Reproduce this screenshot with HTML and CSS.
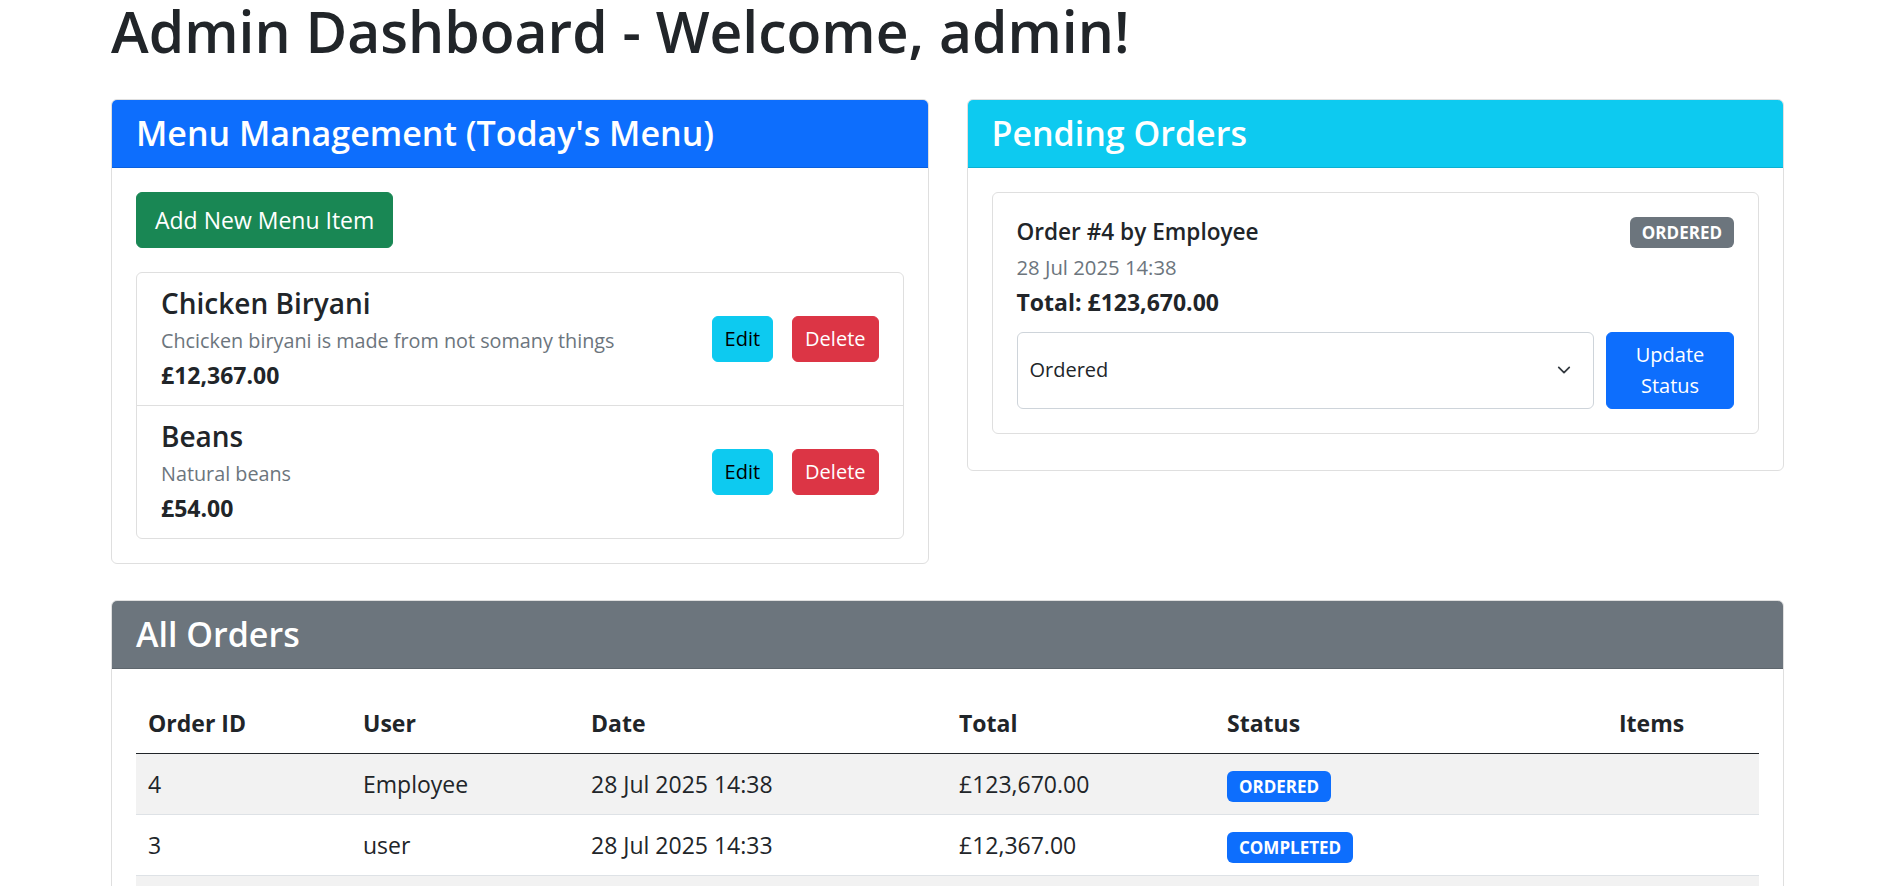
FILE: index.html
```html
<!DOCTYPE html>
<html lang="en">
<head>
<meta charset="utf-8">
<title>Admin Dashboard</title>
<link rel="stylesheet" href="styles.css">
</head>
<body>
<div class="container">
  <h1 class="page-title">Admin Dashboard - Welcome, admin!</h1>

  <div class="top-row">
    <section class="card">
      <div class="card-header bg-primary">
        <h2 class="card-heading">Menu Management (Today's Menu)</h2>
      </div>
      <div class="card-body menu-body">
        <button class="btn btn-success">Add New Menu Item</button>
        <ul class="menu-list">
          <li class="menu-item">
            <div class="item-info">
              <h3 class="item-name">Chicken Biryani</h3>
              <p class="item-desc"><small>Chcicken biryani is made from not somany things</small></p>
              <p class="item-price">£12,367.00</p>
            </div>
            <div class="item-actions">
              <button class="btn btn-sm btn-info">Edit</button>
              <button class="btn btn-sm btn-danger">Delete</button>
            </div>
          </li>
          <li class="menu-item">
            <div class="item-info">
              <h3 class="item-name">Beans</h3>
              <p class="item-desc"><small>Natural beans</small></p>
              <p class="item-price">£54.00</p>
            </div>
            <div class="item-actions">
              <button class="btn btn-sm btn-info">Edit</button>
              <button class="btn btn-sm btn-danger">Delete</button>
            </div>
          </li>
        </ul>
      </div>
    </section>

    <section class="card">
      <div class="card-header bg-info">
        <h2 class="card-heading">Pending Orders</h2>
      </div>
      <div class="card-body">
        <div class="order-card">
          <div class="order-top">
            <h3 class="order-title">Order #4 by Employee</h3>
            <span class="badge bg-secondary">ORDERED</span>
          </div>
          <p class="order-date">28 Jul 2025 14:38</p>
          <p class="order-total">Total: £123,670.00</p>
          <form class="status-form">
            <select class="status-select">
              <option selected>Ordered</option>
              <option>Preparing</option>
              <option>Completed</option>
              <option>Cancelled</option>
            </select>
            <button type="button" class="btn btn-sm btn-primary status-btn">Update Status</button>
          </form>
        </div>
      </div>
    </section>
  </div>

  <section class="card orders">
    <div class="card-header bg-secondary">
      <h2 class="card-heading">All Orders</h2>
    </div>
    <div class="card-body">
      <table class="orders-table">
        <colgroup>
          <col class="col-id">
          <col class="col-user">
          <col class="col-date">
          <col class="col-total">
          <col class="col-status">
          <col class="col-items">
        </colgroup>
        <thead>
          <tr>
            <th>Order ID</th>
            <th>User</th>
            <th>Date</th>
            <th>Total</th>
            <th>Status</th>
            <th>Items</th>
          </tr>
        </thead>
        <tbody>
          <tr>
            <td>4</td>
            <td>Employee</td>
            <td>28 Jul 2025 14:38</td>
            <td>£123,670.00</td>
            <td><span class="badge bg-primary">ORDERED</span></td>
            <td></td>
          </tr>
          <tr>
            <td>3</td>
            <td>user</td>
            <td>28 Jul 2025 14:33</td>
            <td>£12,367.00</td>
            <td><span class="badge bg-primary">COMPLETED</span></td>
            <td></td>
          </tr>
          <tr>
            <td>2</td>
            <td>user</td>
            <td>28 Jul 2025 14:20</td>
            <td>£54.00</td>
            <td><span class="badge bg-primary">COMPLETED</span></td>
            <td></td>
          </tr>
        </tbody>
      </table>
    </div>
  </section>
</div>
</body>
</html>
```
FILE: styles.css
```css
* { box-sizing: border-box; }

html { scrollbar-width: none; }

body {
  margin: 0;
  font-family: "Open Sans", "Noto Sans", sans-serif;
  font-size: 23px;
  line-height: 36px;
  color: #212529;
  background: #fff;
}

.container {
  width: 1673px;
  margin-left: 111px;
}

.page-title {
  margin: 0 0 37px;
  font-size: 57px;
  line-height: 62px;
  font-weight: 600;
}

.top-row {
  display: flex;
  gap: 38px;
  align-items: flex-start;
}

.top-row > .card { flex: 1 1 0; min-width: 0; }

.card {
  border: 1px solid #dfdfdf;
  border-radius: 6px;
  background: #fff;
}

.card-header {
  padding: 12px 24px;
  border-bottom: 1px solid rgba(0, 0, 0, 0.125);
  border-radius: 5px 5px 0 0;
  color: #fff;
}

.card-heading {
  margin: 0;
  font-size: 34px;
  line-height: 43px;
  font-weight: 600;
}

.bg-primary { background: #0d6efd; }
.bg-info { background: #0dcaf0; }
.bg-secondary { background: #6c757d; }

.card-body { padding: 24px; }

.btn {
  display: inline-block;
  border: 1px solid transparent;
  border-radius: 6px;
  padding: 9px 18px;
  font-family: inherit;
  font-size: 23px;
  line-height: 36px;
  font-weight: 400;
  text-align: center;
  cursor: pointer;
}

.btn-sm {
  padding: 6px 12px;
  font-size: 20px;
  line-height: 31.5px;
}

.btn-success { background: #198754; border-color: #198754; color: #fff; }
.btn-info { background: #0dcaf0; border-color: #0dcaf0; color: #000; }
.btn-danger { background: #dc3545; border-color: #dc3545; color: #fff; }
.btn-primary { background: #0d6efd; border-color: #0d6efd; color: #fff; }

/* Menu management */
.menu-body {
  display: flex;
  flex-direction: column;
  align-items: flex-start;
  gap: 24px;
}

.menu-list {
  align-self: stretch;
  margin: 0;
  padding: 0;
  list-style: none;
  border: 1px solid #dfdfdf;
  border-radius: 6px;
}

.menu-item {
  display: flex;
  justify-content: space-between;
  align-items: center;
  padding: 12px 24px;
}

.menu-item + .menu-item { border-top: 1px solid #dfdfdf; }

.item-name {
  margin: 0;
  font-size: 28px;
  line-height: 36px;
  font-weight: 600;
}

.item-desc {
  margin: 0;
  color: #6c757d;
}

.item-desc small { font-size: 19.8px; line-height: 1; }

.item-price { margin: 0; font-weight: 700; }

.item-actions { display: flex; gap: 19px; }

/* Pending orders */
.order-card {
  margin-bottom: 12px;
  padding: 24px;
  border: 1px solid #dfdfdf;
  border-radius: 6px;
}

.order-top {
  display: flex;
  justify-content: space-between;
  align-items: flex-start;
}

.order-title {
  margin: 0 0 5px;
  font-size: 22.6px;
  line-height: 30px;
  font-weight: 600;
}

.badge {
  display: inline-block;
  padding: 7px 12px;
  border-radius: 6px;
  color: #fff;
  font-size: 17px;
  line-height: 1;
  font-weight: 700;
  white-space: nowrap;
}

.order-date {
  margin: 0;
  font-size: 20.3px;
  line-height: 31.5px;
  color: #6c757d;
}

.order-total { margin: 0 0 12px; font-weight: 700; }

.status-form { display: flex; gap: 12px; }

.status-select {
  flex: 1 1 auto;
  min-width: 0;
  margin: 0;
  padding: 6px 48px 6px 12px;
  border: 1px solid #ced4da;
  border-radius: 6px;
  background-color: #fff;
  background-image: url("data:image/svg+xml,%3csvg xmlns='http://www.w3.org/2000/svg' viewBox='0 0 16 16'%3e%3cpath fill='none' stroke='%23343a40' stroke-linecap='round' stroke-linejoin='round' stroke-width='2' d='m2 5 6 6 6-6'/%3e%3c/svg%3e");
  background-repeat: no-repeat;
  background-position: right 20px center;
  background-size: 18px 14px;
  color: #212529;
  font-family: inherit;
  font-size: 20px;
  line-height: 31.5px;
  appearance: none;
  -webkit-appearance: none;
}

.status-btn { flex: 0 0 128px; width: 128px; }

/* All orders */
.orders { margin-top: 36px; }

.orders-table {
  width: 100%;
  margin-bottom: 24px;
  border-collapse: collapse;
  table-layout: fixed;
}

.col-id { width: 215px; }
.col-user { width: 228px; }
.col-date { width: 368px; }
.col-total { width: 268px; }
.col-status { width: 392px; }
.col-items { width: 152px; }

.orders-table th,
.orders-table td {
  padding: 12px;
  text-align: left;
  vertical-align: top;
  border-bottom: 1px solid #dee2e6;
}

.orders-table th { font-weight: 700; vertical-align: bottom; }
.orders-table thead th { border-bottom-color: #212529; }
.orders-table tbody tr:nth-child(odd) td { background: #f2f2f2; }
```
